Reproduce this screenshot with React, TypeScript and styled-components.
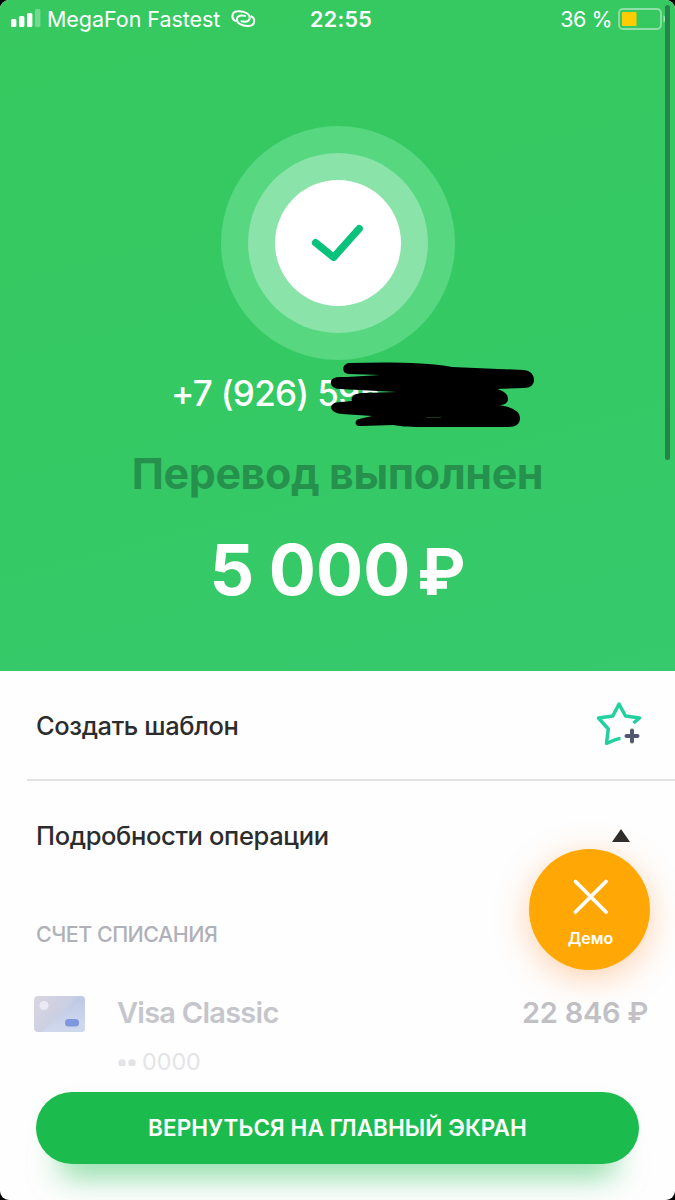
import React from 'react';
import styled, { createGlobalStyle } from 'styled-components';

const GlobalStyle = createGlobalStyle`
  * { box-sizing: border-box; }
  body { margin: 0; background: #000; }
`;

const Screen = styled.div`
  position: relative;
  width: 675px;
  height: 1200px;
  overflow: hidden;
  border-radius: 9px;
  background: #fefefe;
  font-family: Inter, "Liberation Sans", sans-serif;
  display: flex;
  flex-direction: column;
`;

const Hero = styled.header`
  flex: none;
  height: 671px;
  display: flex;
  flex-direction: column;
  align-items: center;
  color: #fff;
  background: linear-gradient(165deg, #37c960 0%, #35c964 55%, #36c96d 100%);
`;

const StatusBar = styled.div`
  align-self: stretch;
  height: 38px;
  padding: 0 11px 0 11px;
  display: grid;
  grid-template-columns: 299px auto 1fr;
  align-items: center;
`;

const StatusGroup = styled.div<{ $end?: boolean }>`
  display: flex;
  align-items: center;
  justify-content: ${(p) => (p.$end ? 'flex-end' : 'flex-start')};
`;

const Label = styled.span<{
  $size: number;
  $line: number;
  $weight?: number;
  $spacing?: number;
  $color?: string;
}>`
  font-size: ${(p) => p.$size}px;
  line-height: ${(p) => p.$line}px;
  font-weight: ${(p) => p.$weight ?? 500};
  letter-spacing: ${(p) => p.$spacing ?? 0}px;
  color: ${(p) => p.$color ?? 'inherit'};
  white-space: pre;
`;

const SignalIcon = styled.svg`
  margin-right: 6px;
`;
const LinkIcon = styled.svg`
  margin-left: 11px;
  margin-top: -1px;
`;
const BatteryIcon = styled.svg`
  margin: 0 -3px 0 6px;
`;

const OuterRing = styled.div`
  flex: none;
  width: 234px;
  height: 234px;
  margin-top: 88px;
  border-radius: 50%;
  background: #56d780;
  display: grid;
  place-items: center;
`;
const InnerRing = styled.div`
  width: 180px;
  height: 180px;
  border-radius: 50%;
  background: #8ae3a8;
  display: grid;
  place-items: center;
`;
const Disc = styled.div`
  width: 126px;
  height: 126px;
  border-radius: 50%;
  background: #fff;
  display: grid;
  place-items: center;
`;

const PhoneRow = styled.div`
  position: relative;
  align-self: stretch;
  height: 68px;
  padding: 11px 0 0 171px;
`;
const Scribble = styled.svg`
  position: absolute;
  left: 325px;
  top: -1px;
`;
const Title = styled.div`
  height: 92px;
  padding-top: 17px;
`;
const Amount = styled.div`
  display: flex;
  align-items: baseline;
  gap: 7px;
  word-spacing: -2px;
`;

const Row = styled.div<{ $height: number; $line?: boolean }>`
  flex: none;
  height: ${(p) => p.$height}px;
  margin-left: 27px;
  padding: 0 33px 0 9px;
  display: flex;
  align-items: center;
  justify-content: space-between;
  border-bottom: ${(p) => (p.$line ? '2px solid #e3e3e3' : '0')};
`;

const RowTitle = styled.div<{ $drop?: boolean }>`
  padding-top: ${(p) => (p.$drop ? '2px' : '0')};
  display: flex;
`;

const StarIcon = styled.svg`
  margin-bottom: 5px;
`;
const Caret = styled.svg`
  margin: 0 12px 1px 0;
`;

const Section = styled.div`
  flex: none;
  padding: 28px 0 0 36px;
  display: flex;
`;

const Account = styled.div`
  flex: none;
  margin-top: 46px;
  padding: 0 27px 0 34px;
  display: grid;
  grid-template-columns: 83px 1fr auto;
  align-items: start;
`;
const AccountName = styled.div`
  display: flex;
  flex-direction: column;
`;
const Masked = styled.div`
  display: flex;
  align-items: center;
  gap: 6px;
  margin-top: 18px;
`;
const CardIcon = styled.svg`
  margin-top: 1px;
`;

const HomeButton = styled.button`
  position: absolute;
  left: 36px;
  top: 1092px;
  width: 603px;
  height: 72px;
  padding: 0;
  border: 0;
  border-radius: 36px;
  background: #1bbb4e;
  color: #fff;
  font-family: inherit;
  box-shadow: 0 34px 30px -22px rgba(27, 187, 78, 0.55), 0 0 14px rgba(27, 187, 78, 0.05);
`;

const DemoButton = styled.button`
  position: absolute;
  left: 529px;
  top: 849px;
  width: 121px;
  height: 121px;
  padding: 29px 0 0 2px;
  border: 0;
  border-radius: 50%;
  background: #ffa805;
  color: #fff;
  font-family: inherit;
  display: flex;
  flex-direction: column;
  align-items: center;
  gap: 12px;
  box-shadow: 0 8px 34px rgba(255, 130, 30, 0.36);
`;

const ScrollThumb = styled.div`
  position: absolute;
  left: 665px;
  top: 5px;
  width: 5px;
  height: 455px;
  border-radius: 3px;
  background: #268448;
`;

export default function App() {
  return (
    <Screen>
      <GlobalStyle />
      <Hero>
        <StatusBar>
          <StatusGroup>
            <SignalIcon width="30" height="20" viewBox="0 0 30 20" fill="#fff">
              <rect x="0" y="10" width="5.4" height="8" rx="1.6" />
              <rect x="8" y="7" width="5.4" height="11" rx="1.6" />
              <rect x="16" y="4" width="5.4" height="14" rx="1.6" />
              <rect x="24" y="0" width="5.4" height="18" rx="1.6" opacity="0.3" />
            </SignalIcon>
            <Label $size={21.5} $line={24} $weight={400} $spacing={-0.05}>MegaFon Fastest</Label>
            <LinkIcon width="25" height="20" viewBox="0 0 25 20" fill="none" stroke="#fff" strokeWidth="2" strokeLinecap="round">
              <path d="M4.200 11.800C2.300 10.800 1.300 9 1.400 7.200C1.600 4 4 2.200 7 2.200C10 2 13 2.600 15.500 4C18 5.500 19.200 7.600 18.500 10C17.600 12.800 14.500 13.300 10.500 12.300" />
              <path d="M20.400 7.400C22.300 8.400 23.300 10.200 23.200 12C23 15.200 20.600 17 17.600 17C14.600 17.200 11.600 16.600 9.100 15.200C6.600 13.700 5.400 11.600 6.100 9.200C7 6.400 10.100 5.900 14.100 6.900" />
            </LinkIcon>
          </StatusGroup>
          <Label $size={21.5} $line={26} $weight={600} $spacing={0.3}>22:55</Label>
          <StatusGroup $end>
            <Label $size={21.5} $line={26} $weight={400} $spacing={-0.5}>36 %</Label>
            <BatteryIcon width="49" height="22" viewBox="0 0 49 22">
              <rect x="1" y="1" width="42" height="20" rx="4" fill="none" stroke="#8fdfa8" strokeWidth="1.800" />
              <rect x="4" y="4" width="14.5" height="14" rx="1" fill="#ffcc00" />
              <path d="M45.5 7Q50 11 45.5 15Z" fill="#9be3b0" />
            </BatteryIcon>
          </StatusGroup>
        </StatusBar>
        <OuterRing>
          <InnerRing>
            <Disc>
              <svg width="56" height="42" viewBox="0 0 56 42" fill="none">
                <path d="M5.500 20.700L23.700 35.300L49.200 6.600" stroke="#0bc27c" strokeWidth="7.4" strokeLinecap="round" strokeLinejoin="round" />
              </svg>
            </Disc>
          </InnerRing>
        </OuterRing>
        <PhoneRow>
          <Label $size={35} $line={44} $spacing={-0.72}>+7 (926) 595</Label>
          <Scribble width="214" height="72" viewBox="325 359 214 72">
            <path
              fill="#000"
              d="M349 363C385 362 425 362 452 367L524 370C531 371 534 375 534 380C534 385 530 388 524 388L497 389C504 391 508 394 508 399C508 404 503 405 499 405C512 407 520 411 520 418C520 424 516 427 508 427L420 427C408 427 398 426 393 425L362 426C354 427 354 420 359 419L372 416L342 414C334 413 329 409 332 405C334 401 346 402 352 401C350 396 356 393 363 393L397 392L340 389C333 389 330 385 331 381C333 376 341 377 347 377L380 375L348 374C341 373 342 364 349 363Z"
            />
            <rect x="426" y="417" width="15" height="1" rx="0.5" fill="#0f3b1e" />
          </Scribble>
        </PhoneRow>
        <Title>
          <Label $size={43} $line={56} $weight={700} $spacing={-0.4} $color="#26914d">Перевод выполнен</Label>
        </Title>
        <Amount>
          <Label $size={70} $line={100} $weight={700} $spacing={0}>5 000</Label>
          <Label $size={65} $line={100} $weight={700}>₽</Label>
        </Amount>
      </Hero>

      <Row $height={110} $line>
        <RowTitle $drop>
          <Label $size={25.5} $line={32} $spacing={-0.42} $color="#2c2c2c">Создать шаблон</Label>
        </RowTitle>
        <StarIcon width="46" height="44" viewBox="0 0 46 44" fill="none">
          <path d="M24.500 37.500C20.500 37.500 16 40.500 10.500 42.300L12.300 28L2.500 17L16.800 15L23 3L29.500 15L43.500 17L37.500 22" stroke="#25d0a0" strokeWidth="3.5" strokeLinejoin="round" />
          <path d="M36 29.5V40.5M30.500 35H41.500" stroke="#545873" strokeWidth="4" strokeLinecap="round" />
        </StarIcon>
      </Row>
      <Row $height={110}>
        <RowTitle>
          <Label $size={25.5} $line={32} $spacing={-0.36} $color="#2c2c2c">Подробности операции</Label>
        </RowTitle>
        <Caret width="18" height="13" viewBox="0 0 18 13">
          <path d="M9 0L18 13H0Z" fill="#2d2d2d" />
        </Caret>
      </Row>
      <Section>
        <Label $size={21.5} $line={30} $spacing={-0.54} $color="#b0b1b8">СЧЕТ СПИСАНИЯ</Label>
      </Section>
      <Account>
        <CardIcon width="51" height="36" viewBox="0 0 51 36">
          <defs>
            <linearGradient id="card" x1="0" y1="0" x2="1" y2="0.4">
              <stop offset="0" stopColor="#d9d6e2" />
              <stop offset="0.5" stopColor="#cdd0e2" />
              <stop offset="1" stopColor="#c0cde8" />
            </linearGradient>
            <linearGradient id="shine" x1="0" y1="0" x2="0.3" y2="1">
              <stop offset="0" stopColor="#b2bfdf" />
              <stop offset="1" stopColor="#d3dcef" />
            </linearGradient>
          </defs>
          <rect width="51" height="36" rx="4" fill="url(#card)" />
          <path d="M45 0H47Q51 0 51 4V32Q51 36 47 36H8Z" fill="url(#shine)" opacity="0.75" />
          <circle cx="10" cy="9.500" r="4.600" fill="#ebe9f3" />
          <rect x="31" y="23" width="14" height="7.500" rx="3.500" fill="#7d98de" />
        </CardIcon>
        <AccountName>
          <Label $size={29} $line={35} $weight={600} $spacing={-0.75} $color="#c5c6cb">Visa Classic</Label>
          <Masked>
            <svg width="19" height="8" viewBox="0 0 19 8" fill="#e3e3e7">
              <circle cx="5" cy="5" r="3.700" />
              <circle cx="15" cy="5" r="3.700" />
            </svg>
            <Label $size={23.3} $line={28} $weight={400} $color="#e4e4e8">0000</Label>
          </Masked>
        </AccountName>
        <Label $size={29} $line={35} $weight={600} $spacing={-0.3} $color="#c0c0c5">22 846 ₽</Label>
      </Account>

      <HomeButton>
        <Label $size={22.5} $line={30} $weight={600} $spacing={0.08}>ВЕРНУТЬСЯ НА ГЛАВНЫЙ ЭКРАН</Label>
      </HomeButton>
      <DemoButton>
        <svg width="38" height="38" viewBox="0 0 38 38">
          <path d="M3.500 3.500L34 34M34 3.500L3.500 34" stroke="#fff" strokeWidth="3.800" strokeLinecap="round" />
        </svg>
        <Label $size={16} $line={20} $weight={600}>Демо</Label>
      </DemoButton>
      <ScrollThumb />
    </Screen>
  );
}
